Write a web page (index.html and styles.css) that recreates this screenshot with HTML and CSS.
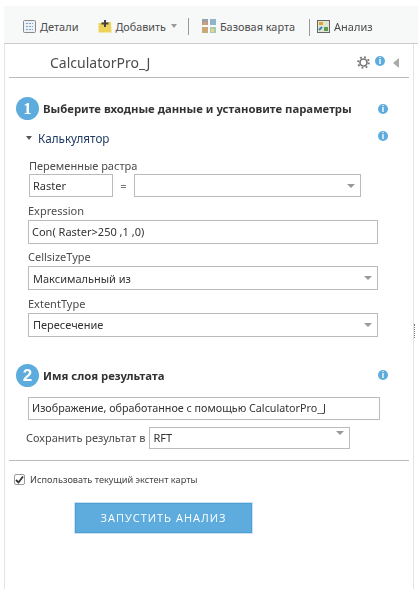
FILE: index.html
```html
<!DOCTYPE html>
<html lang="ru">
<head>
    <meta charset="UTF-8">
    <title>CalculatorPro_J</title>
    <link rel="stylesheet" href="styles.css">
</head>
<body>
    <div class="toolbar">
        <span class="tool tool-details">
            <svg width="13" height="13" viewBox="0 0 13 13"><rect x="0.500" y="0.500" width="12" height="12" rx="1" fill="#eef1f4" stroke="#8a8a8a"/><path d="M3 3.500h7M3 6.500h7M3 9.500h7" stroke="#6fa8d8" stroke-dasharray="2 1"/></svg>
            Детали
        </span>
        <span class="tool tool-add">
            <svg width="14" height="14" viewBox="0 0 14 14"><path d="M0.500 13.500V4h2.500l1-1h9l.5 10.500z" fill="#eed35a"/><path d="M7 1v7M3.500 4.500h7" stroke="#444" stroke-width="2"/></svg>
            Добавить
            <span class="caret"></span>
        </span>
        <span class="sep sep-a"></span>
        <span class="tool tool-base">
            <svg width="14" height="14" viewBox="0 0 14 14"><rect width="6" height="6" fill="#9aa0a6"/><rect x="8" width="6" height="6" fill="#8fb4cc"/><rect y="8" width="6" height="6" fill="#c9a878"/><rect x="8" y="8" width="6" height="6" fill="#a8cbb0"/><rect x="1" y="3" width="4" height="3" fill="#d8a070"/><rect x="9" y="10" width="3" height="3" fill="#e6d58c"/></svg>
            Базовая карта
        </span>
        <span class="sep sep-b"></span>
        <span class="tool">
            <svg width="13" height="13" viewBox="0 0 13 13"><rect x="0.500" y="0.500" width="12" height="12" fill="#dfe8cf" stroke="#666"/><path d="M2 2h4v3H2z" fill="#e0a03c"/><path d="M7 7h4v4H7z" fill="#5b9a5a"/><path d="M2 10l3-3" stroke="#3f7fb8" stroke-width="2"/></svg>
            Анализ
        </span>
    </div>

    <div class="panel">
        <div class="panel-head">
            <span class="panel-title">CalculatorPro_J</span>
            <svg class="gear" width="13" height="13" viewBox="0 0 14 14"><circle cx="7" cy="7" r="3.800" fill="none" stroke="#777" stroke-width="1.800"/><circle cx="7" cy="7" r="5.800" fill="none" stroke="#777" stroke-width="2" stroke-dasharray="2 2.550"/></svg>
            <span class="info info-head">i</span>
            <span class="collapse"></span>
        </div>

        <div class="step step-one">
            <span class="badge">1</span>
            <span class="step-title">Выберите входные данные и установите параметры</span>
            <span class="info">i</span>
        </div>

        <div class="group-head">
            <span class="group-arrow"></span>
            <span class="group-title">Калькулятор</span>
            <span class="info info-group">i</span>
        </div>

        <div class="fields">
            <div class="label label-raster">Переменные растра</div>
            <div class="raster-row">
                <div class="box box-raster">Raster</div>
                <span class="equals">=</span>
                <div class="box box-value"><span class="caret"></span></div>
            </div>
            <div class="label">Expression</div>
            <div class="box box-text">Con( Raster&gt;250 ,1 ,0)</div>
            <div class="label">CellsizeType</div>
            <div class="box box-select">Максимальный из<span class="caret"></span></div>
            <div class="label">ExtentType</div>
            <div class="box box-select">Пересечение<span class="caret"></span></div>
        </div>

        <div class="step step-two">
            <span class="badge">2</span>
            <span class="step-title">Имя слоя результата</span>
            <span class="info">i</span>
        </div>

        <div class="fields">
            <div class="box box-text box-name">Изображение, обработанное с помощью CalculatorPro_J</div>
            <div class="save-row">
                <span>Сохранить результат в</span>
                <div class="box box-save">RFT<span class="caret caret-up"></span></div>
            </div>
        </div>

        <div class="extent">
            <span class="check"><svg width="9" height="9" viewBox="0 0 9 9"><path d="M1 5l2.500 2.500L8 1.500" fill="none" stroke="#333" stroke-width="1.800"/></svg></span>
            Использовать текущий экстент карты
        </div>

        <button class="run">ЗАПУСТИТЬ АНАЛИЗ</button>
    </div>

    <span class="grip"></span>
</body>
</html>
```

FILE: styles.css
```css
* {
    box-sizing: border-box;
}

html, body {
    height: 100%;
}

body {
    margin: 0;
    padding: 6px 0 0 4px;
    background-color: #fff;
    color: #4c4c4c;
    font-family: "Noto Sans", Verdana, sans-serif;
    font-size: 11px;
    overflow: hidden;
    position: relative;
    filter: blur(0.3px);
}

.toolbar {
    display: flex;
    align-items: center;
    height: 38px;
    padding: 3px 0 0 19px;
    background-color: #f7f8f8;
    border-bottom: 1px solid #ccc;
    white-space: nowrap;
}

.tool {
    display: flex;
    align-items: center;
    gap: 4px;
}

.tool-details {
    margin-right: 19px;
}

.tool-add {
    font-size: 10.800px;
}

.tool-base {
    margin-right: 14px;
    font-size: 10.900px;
}

.sep {
    width: 1px;
    height: 17px;
    background-color: #999;
}

.sep-a {
    margin: 0 13px 0 11px;
}

.sep-b {
    margin-right: 7px;
    margin-top: 3px;
}

.caret {
    width: 0;
    height: 0;
    border-left: 4px solid transparent;
    border-right: 4px solid transparent;
    border-top: 4px solid #999;
}

.tool .caret {
    margin-left: 1px;
    border-left-width: 3.500px;
    border-right-width: 3.500px;
}

.panel {
    width: 410px;
    height: 546px;
    padding: 0 4px;
    border-left: 1px solid #e4e4e4;
    border-right: 1px solid #e4e4e4;
}

.panel-head {
    display: flex;
    align-items: center;
    height: 34px;
    padding: 4px 0 0 41px;
    border-bottom: 1px solid #bbb;
}

.panel-title {
    flex: 1;
    font-size: 14px;
    color: #4c4c4c;
}

.gear {
    margin-right: 5px;
}

.info {
    display: block;
    width: 10px;
    height: 10px;
    border-radius: 50%;
    background-color: #5dacdd;
    color: #fff;
    font: bold 9px/10px "Liberation Sans", sans-serif;
    text-align: center;
}

.info-head {
    margin-top: -4px;
}

.info-group {
    margin-top: -5px;
}

.collapse {
    width: 0;
    height: 0;
    margin: 0 10px 0 8px;
    border-top: 5px solid transparent;
    border-bottom: 5px solid transparent;
    border-right: 6px solid #aaa;
}

.step {
    display: flex;
    align-items: center;
    padding: 0 21px 0 7px;
}

.step-one {
    margin-top: 19px;
}

.step-two {
    margin-top: 27px;
}

.badge {
    width: 23px;
    height: 23px;
    border-radius: 50%;
    background-color: #5dacdd;
    color: #fff;
    font: bold 17px/23px "Liberation Serif", serif;
    text-align: center;
    margin-right: 4px;
}

.step-two .badge {
    font-family: "Liberation Sans", sans-serif;
}

.step-title {
    flex: 1;
    font-size: 11.350px;
    font-weight: bold;
    color: #333;
}

.group-head {
    display: flex;
    align-items: center;
    margin-top: 10px;
    padding: 0 21px 0 17px;
}

.group-arrow {
    width: 0;
    height: 0;
    margin-right: 6px;
    border-left: 3px solid transparent;
    border-right: 3px solid transparent;
    border-top: 4px solid #555;
}

.group-title {
    flex: 1;
    font-size: 11.700px;
    color: #1f3a63;
}

.fields {
    padding-left: 19px;
}

.label {
    margin: 6.500px 0 2px;
    line-height: 14px;
}

.label-raster {
    margin: 13px 0 1px 1px;
}

.box {
    display: flex;
    align-items: center;
    justify-content: space-between;
    height: 24px;
    padding: 0 5px 0 3px;
    background-color: #fff;
    border: 1px solid #bbb;
    white-space: nowrap;
    color: #333;
}

.raster-row {
    display: flex;
    align-items: center;
    margin-left: 1px;
}

.box-raster {
    width: 84px;
    height: 23px;
}

.equals {
    width: 21px;
    text-align: center;
    color: #777;
}

.box-value {
    width: 227px;
    height: 23px;
    justify-content: flex-end;
}

.box-text, .box-select {
    width: 350px;
}

.box-select {
    padding-left: 4px;
}

.box-name {
    width: 352px;
    height: 23px;
    margin-top: 10px;
    font-size: 10.750px;
}

.save-row {
    display: flex;
    align-items: center;
    gap: 4px;
    margin: 7px 0 0 -2px;
}

.box-save {
    width: 201px;
    height: 22px;
}

.caret-up {
    margin-bottom: 10px;
}

.extent {
    display: flex;
    align-items: center;
    margin-top: 11px;
    padding: 12px 0 0 5px;
    border-top: 1px solid #bbb;
    font-size: 9.200px;
    color: #444;
}

.check {
    display: flex;
    align-items: center;
    justify-content: center;
    width: 11px;
    height: 11px;
    margin-right: 5px;
    border: 1px solid #999;
    border-radius: 2px;
}

.run {
    display: block;
    width: 177px;
    height: 30px;
    margin: 17px 0 0 66px;
    background-color: #5dacdd;
    border: 1px solid #4f9fd2;
    outline: 1px solid #c9e3f4;
    color: #fff;
    font: 11px "Open Sans", sans-serif;
    letter-spacing: 1px;
}

.grip {
    position: absolute;
    left: 414px;
    top: 324px;
    height: 14px;
    border-left: 1px dotted #777;
}
```
